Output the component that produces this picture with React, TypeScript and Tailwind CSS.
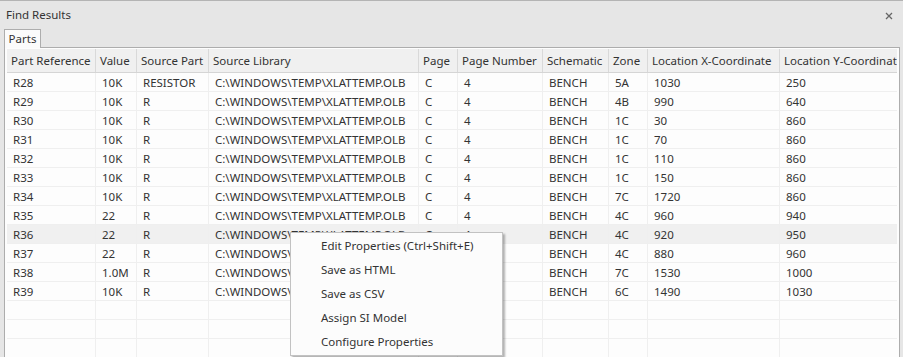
import React from "react";

const cols = [
  { name: "Part Reference", w: "w-[89px]" },
  { name: "Value", w: "w-[41px]" },
  { name: "Source Part", w: "w-[72px]" },
  { name: "Source Library", w: "w-[210px]" },
  { name: "Page", w: "w-[39px]" },
  { name: "Page Number", w: "w-[85px]" },
  { name: "Schematic", w: "w-[66px]" },
  { name: "Zone", w: "w-[39px]" },
  { name: "Location X-Coordinate", w: "w-[132px]" },
  { name: "Location Y-Coordinate", w: "w-[160px]" },
];

const lib = "C:\\WINDOWS\\TEMP\\XLATTEMP.OLB";

const rows: string[][] = [
  ["R28", "10K", "RESISTOR", lib, "C", "4", "BENCH", "5A", "1030", "250"],
  ["R29", "10K", "R", lib, "C", "4", "BENCH", "4B", "990", "640"],
  ["R30", "10K", "R", lib, "C", "4", "BENCH", "1C", "30", "860"],
  ["R31", "10K", "R", lib, "C", "4", "BENCH", "1C", "70", "860"],
  ["R32", "10K", "R", lib, "C", "4", "BENCH", "1C", "110", "860"],
  ["R33", "10K", "R", lib, "C", "4", "BENCH", "1C", "150", "860"],
  ["R34", "10K", "R", lib, "C", "4", "BENCH", "7C", "1720", "860"],
  ["R35", "22", "R", lib, "C", "4", "BENCH", "4C", "960", "940"],
  ["R36", "22", "R", lib, "C", "4", "BENCH", "4C", "920", "950"],
  ["R37", "22", "R", lib, "C", "4", "BENCH", "4C", "880", "960"],
  ["R38", "1.0M", "R", lib, "C", "4", "BENCH", "7C", "1530", "1000"],
  ["R39", "10K", "R", lib, "C", "4", "BENCH", "6C", "1490", "1030"],
  ["", "", "", "", "", "", "", "", "", ""],
  ["", "", "", "", "", "", "", "", "", ""],
  ["", "", "", "", "", "", "", "", "", ""],
];

const menu = [
  "Edit Properties (Ctrl+Shift+E)",
  "Save as HTML",
  "Save as CSV",
  "Assign SI Model",
  "Configure Properties",
];

export default function App() {
  return (
    <div
      className="w-[903px] h-[357px] overflow-hidden bg-[#e6e6e6] border-t border-[#b4b4b4] text-[11.5px] text-[#333] relative"
      style={{ fontFamily: '"Noto Sans", "Open Sans", sans-serif' }}
    >
      <div className="h-[28px] flex items-center justify-between pl-[6px] pr-[10px]">
        <span className="text-[#333]">Find Results</span>
        <svg width="8" height="8" viewBox="0 0 8 8" className="mt-[1px]">
          <path d="M1 1L7 7M7 1L1 7" stroke="#666" strokeWidth="1.3" />
        </svg>
      </div>
      <div className="flex pl-[4px]">
        <div className="relative z-10 -mb-px h-[19px] w-[37px] bg-[#fbfbfb] border border-b-0 border-[#adadad] flex items-center justify-center">
          Parts
        </div>
      </div>
      <div className="ml-[4px] w-[896px] h-[400px] border border-[#adadad] bg-[#fdfdfd] pl-[2px] pt-[1px] overflow-hidden">
        <div className="w-[890px] overflow-hidden">
          <div className="flex h-[24px] bg-[#f0f0f0] border-b border-[#d5d5d5] w-max">
            {cols.map((c) => (
              <div
                key={c.name}
                className={`${c.w} shrink-0 border-r border-[#d9d9d9] flex items-center pl-[4px] whitespace-nowrap overflow-hidden`}
              >
                {c.name}
              </div>
            ))}
          </div>
          {rows.map((r, i) => (
            <div
              key={i}
              className={`flex h-[19px] border-b border-[#efefef] w-max ${
                i === 8 ? "bg-[#f0f0f0]" : ""
              }`}
            >
              {r.map((v, j) => (
                <div
                  key={j}
                  className={`${cols[j].w} shrink-0 border-r border-[#efefef] flex items-center pl-[6px] pt-[1px] whitespace-nowrap overflow-hidden`}
                >
                  {v}
                </div>
              ))}
            </div>
          ))}
        </div>
      </div>
      <div className="absolute left-[290px] top-[231px] w-[213px] border border-[#c2c2c2] bg-[#fcfcfc] py-[1px] shadow-[2px_2px_2px_rgba(0,0,0,0.3)]">
        {menu.map((m) => (
          <div key={m} className="h-[24px] flex items-center pl-[30px] whitespace-nowrap">
            {m}
          </div>
        ))}
      </div>
    </div>
  );
}
